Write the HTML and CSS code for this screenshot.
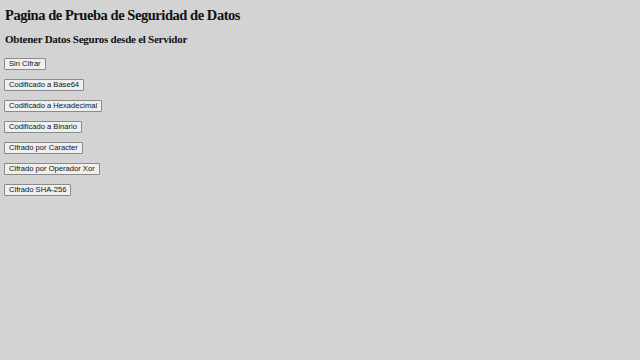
FILE: index.html
```html
<!DOCTYPE html>
<html>
<head>
<meta charset="utf-8">
<link rel="stylesheet" href="styles.css">
</head>
<body>
<h1 class="title">Pagina de Prueba de Seguridad de Datos</h1>
<h2 class="subtitle">Obtener Datos Seguros desde el Servidor</h2>
<div class="buttons">
<button class="btn">Sin Cifrar</button>
<button class="btn">Codificado a Base64</button>
<button class="btn">Codificado a Hexadecimal</button>
<button class="btn">Codificado a Binario</button>
<button class="btn">Cifrado por Caracter</button>
<button class="btn">Cifrado por Operador Xor</button>
<button class="btn">Cifrado SHA-256</button>
</div>
</body>
</html>
```
FILE: styles.css
```css
html, body {
  background: #d3d3d3;
}
body {
  margin: 0;
  padding: 6px 5px;
  font-family: "Liberation Serif", serif;
  color: #111;
}
.title {
  font-size: 14.5px;
  letter-spacing: -0.45px;
  font-weight: bold;
  margin: 0 0 9px 0;
  line-height: 18px;
}
.subtitle {
  font-size: 11px;
  letter-spacing: -0.25px;
  font-weight: bold;
  margin: 0 0 12px 0;
  line-height: 13px;
}
.buttons {
  display: flex;
  flex-direction: column;
  align-items: flex-start;
  gap: 9px;
  margin-left: -1px;
}
.btn {
  font-family: "Liberation Sans", Arial, sans-serif;
  font-size: 7.6px;
  line-height: 8px;
  height: 12px;
  padding: 1px 4px;
  background: #efefef;
  border: 1px solid #8a8a8a;
  border-radius: 1px;
  color: #111;
  margin: 0;
}
```
